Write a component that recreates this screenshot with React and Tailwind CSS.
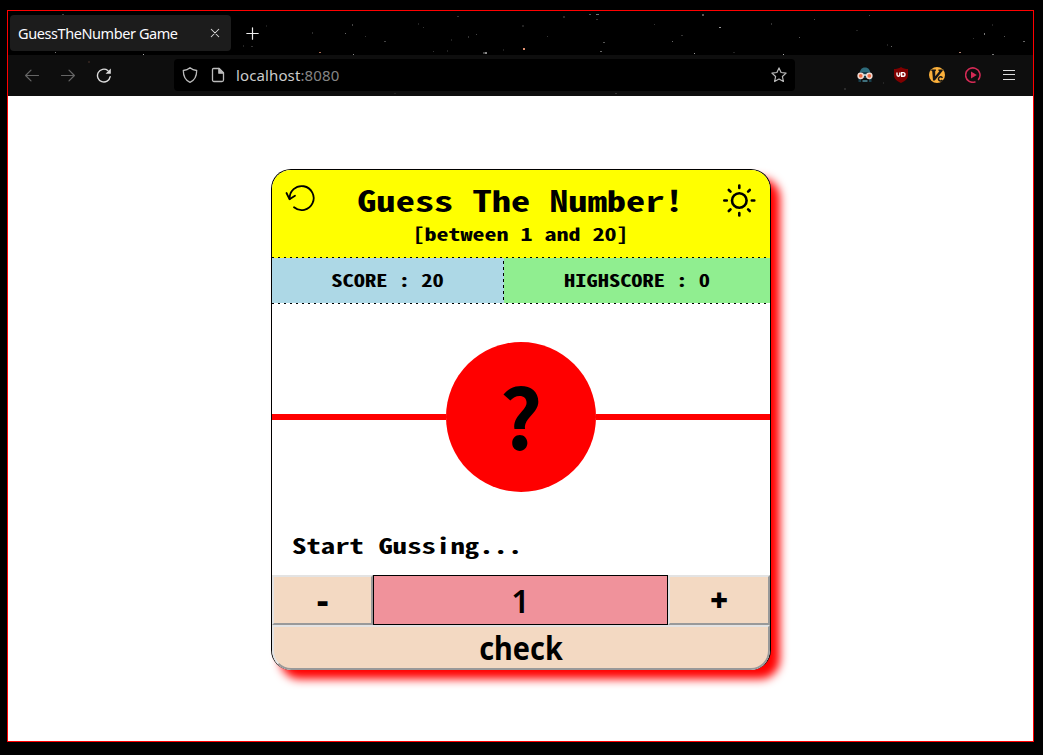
import React from "react";

const mono = "font-['Noto_Sans_Mono_CJK_JP','Noto_Sans_Mono_CJK_SC','Liberation_Mono',monospace]";
const sans = "font-['Noto_Sans',sans-serif]";

// x, y, w, h, colour of the stars in the browser theme backdrop
const stars = [
  [54, 3, 2, 1, "#3d4442"], [47, 41, 1, 1, "#777"], [135, 43, 1, 1, "#aaa"], [80, 50, 2, 2, "#2c201c"],
  [235, 34, 1, 2, "#242424"], [243, 35, 2, 1, "#333"], [258, 14, 1, 2, "#1d1d1d"], [304, 21, 1, 2, "#2c2c2c"],
  [337, 22, 1, 1, "#666"], [311, 41, 2, 1, "#a86a52"], [345, 43, 1, 1, "#888"], [344, 13, 1, 2, "#444"],
  [357, 25, 1, 1, "#333"], [376, 30, 2, 1, "#444"], [410, 12, 1, 2, "#222"], [415, 16, 1, 1, "#333"],
  [443, 28, 1, 2, "#222"], [425, 40, 1, 1, "#333"], [439, 39, 1, 2, "#222"], [460, 25, 1, 2, "#333"],
  [449, 5, 2, 1, "#333"], [468, 23, 1, 1, "#444"], [475, 41, 2, 2, "#444"], [477, 41, 2, 2, "#888"],
  [495, 38, 1, 2, "#222"], [514, 14, 2, 2, "#222"], [515, 37, 2, 2, "#e09070"], [539, 25, 1, 1, "#333"],
  [555, 5, 2, 2, "#2a2a2a"], [581, 3, 2, 1, "#4b5a58"], [588, 3, 3, 1, "#6b7876"], [588, 8, 2, 1, "#333"],
  [595, 31, 2, 1, "#555"], [592, 40, 2, 1, "#666"], [646, 13, 1, 1, "#333"], [664, 30, 1, 1, "#666"],
  [673, 24, 2, 1, "#333"], [686, 42, 1, 1, "#999"], [694, 3, 2, 2, "#555"], [711, 16, 2, 1, "#999"],
  [725, 41, 2, 1, "#222"], [763, 12, 1, 2, "#333"], [775, 43, 1, 1, "#aaa"], [791, 26, 1, 1, "#555"],
  [806, 8, 1, 1, "#444"], [848, 19, 2, 1, "#222"], [861, 4, 1, 1, "#444"], [883, 35, 1, 1, "#666"],
  [879, 33, 1, 2, "#222"], [951, 41, 2, 1, "#b08070"], [976, 22, 1, 2, "#777"], [984, 43, 2, 1, "#777"],
  [1015, 30, 2, 1, "#666"], [984, 13, 1, 2, "#222"], [996, 25, 1, 1, "#555"], [875, 71, 1, 2, "#252525"],
  [836, 77, 2, 2, "#2a2a2a"], [607, 82, 2, 1, "#333"], [386, 82, 2, 1, "#222"], [965, 27, 1, 1, "#333"],
];

function Stars() {
  return (
    <svg className="pointer-events-none absolute inset-0" width="1025" height="85" shapeRendering="crispEdges">
      {stars.map(([x, y, w, h, c], i) => (
        <rect key={i} x={x} y={y} width={w} height={h} fill={c} />
      ))}
    </svg>
  );
}

function Icon({ size = 16, children, className = "" }) {
  return (
    <svg width={size} height={size} viewBox="0 0 16 16" fill="none" stroke="currentColor" strokeWidth="1.2" strokeLinecap="round" strokeLinejoin="round" className={`block shrink-0 ${className}`}>
      {children}
    </svg>
  );
}

function Chrome() {
  return (
    <header className={`relative h-[85px] bg-black ${sans} text-[#fbfbfe]`}>
      <div className="flex h-11 items-start pl-[2px] pt-1">
        <div className="flex h-9 w-[221px] items-center justify-between rounded bg-[#1c1c1c] pl-2 pr-[10px]">
          <span className="whitespace-nowrap text-[14.5px] leading-5 tracking-[-0.42px]">GuessTheNumber Game</span>
          <Icon size={12} className="text-[#ddd]"><path d="M3 3l10 10M13 3L3 13" strokeWidth="1.4" /></Icon>
        </div>
        <Icon className="ml-[13px] mt-[10px] text-[#eee]"><path d="M8.500 2.800v11.400M2.800 8.500h11.400" /></Icon>
      </div>
      <div className="flex h-[41px] items-center bg-[#0e0e0e] pb-px pl-4">
        <Icon className="text-[#666]"><path d="M14.5 8.500H1.6M7 3.100L1.6 8.500 7 13.900" /></Icon>
        <Icon className="ml-5 text-[#666]"><path d="M1.5 8.500h12.9M9 3.100L14.4 8.500 9 13.900" /></Icon>
        <Icon className="ml-5 text-[#ddd]">
          <path d="M14.2 9.7A6.4 6.4 0 1 1 11.8 3.5" strokeWidth="1.4" />
          <path d="M14.8 1.5v5.2H9.6z" fill="currentColor" stroke="none" />
        </Icon>
        <div className="ml-[62px] flex h-8 w-[621px] items-center rounded bg-black pl-2">
          <Icon className="text-[#bbb]"><path d="M8 .8c2 1.8 4.2 2.5 6.7 2.7 0 5.400-1.600 9.600-6.700 11.800C2.900 13.100 1.300 8.900 1.300 3.500 3.800 3.300 6 2.600 8 .8z" strokeWidth="1.3" /></Icon>
          <Icon className="ml-3 text-[#bbb]"><path d="M3.500 1.500h5.700l4.300 4.300v7.200a1.500 1.500 0 0 1-1.500 1.500H4A1.500 1.500 0 0 1 2.500 13V2.500a1 1 0 0 1 1-1z" strokeWidth="1.300" /><path d="M8.800 1.500v4.700h4.700z" fill="currentColor" /></Icon>
          <span className="ml-[10px] text-[15px] leading-5 tracking-[0.12px] text-[#ccc]">localhost<span className="text-[#858585]">:8080</span></span>
          <Icon className="ml-auto mr-2 text-[#bbb]"><path d="M8 .9l2.100 4.600 5 .6-3.700 3.400 1 5L8 12l-4.400 2.500 1-5L.9 6.100l5-.6z" /></Icon>
        </div>
        <div className="ml-[62px] flex items-center gap-5">
          <svg width="16" height="16" viewBox="0 0 16 16">
            <path d="M2.500 8C2.500 3 4.500.5 8 .5S13.500 3 13.500 8z" fill="#2e6b7b" />
            <path d="M1.500 6.500L4 5h8l2.500 1.500V15H12v-4H4v4H1.500z" fill="#173f4c" />
            <path d="M5.500 13h5v2h-5z" fill="#3f6f7c" />
            <circle cx="3.700" cy="8.800" r="2.600" fill="#ed6b43" stroke="#f2d9cf" strokeWidth="1.500" />
            <circle cx="12.300" cy="8.800" r="2.600" fill="#ed6b43" stroke="#f2d9cf" strokeWidth="1.500" />
            <path d="M6.500 8h3" stroke="#fff" strokeWidth="1.300" />
          </svg>
          <svg width="16" height="16" viewBox="0 0 16 16">
            <path d="M8 0c2 1.500 4.500 2 7 2v6c0 4-3 6-7 8-4-2-7-4-7-8V2c2.500 0 5-.5 7-2z" fill="#800000" />
            <path d="M4 5.500v2.300a1.400 1.400 0 0 0 2.800 0V5.500M8.600 5.600h1.600a1.800 1.800 0 0 1 0 3.600H8.600z" fill="none" stroke="#fff" strokeWidth="1.400" />
          </svg>
          <svg width="16" height="16" viewBox="0 0 16 16">
            <circle cx="8" cy="8" r="8" fill="#fbb03b" />
            <path d="M2.300 2.500h4.600v1.300l-.7.500v5L10.300 4.300l-.9-.5V2.500h4.300v1.300L5.800 13.500H4L3.200 4.300l-.9-.5z" fill="#161616" />
            <path d="M13.400 10.800a2.100 2.100 0 1 0 0 2.200" fill="none" stroke="#161616" strokeWidth="1.500" />
          </svg>
          <svg width="16" height="16" viewBox="0 0 16 16">
            <path d="M13.200 12.900A7.200 7.200 0 1 0 10.500 14.800" fill="none" stroke="#d42a55" strokeWidth="1.500" />
            <path d="M6 4.500l5.800 3.500L6 11.500z" fill="#d42a55" />
          </svg>
          <svg width="16" height="16" viewBox="0 0 16 16" shapeRendering="crispEdges">
            <path d="M2 3h12v1H2zM2 7h12v1H2zM2 12h12v1H2z" fill="#ddd" />
          </svg>
        </div>
      </div>
      <Stars />
    </header>
  );
}

const raised = "border-2 border-b-[#999] border-l-[#e3e3e3] border-r-[#999] border-t-[#e3e3e3] bg-[#f3d9c2]";

function Card() {
  return (
    <main className={`flex h-[501px] w-[500px] flex-col overflow-hidden rounded-[20px] border border-b-0 border-black bg-white font-bold text-black shadow-[9px_9px_10px_red] ${mono}`}>
      <div className="flex h-[87px] justify-between bg-[#ff0] pl-[13px] pr-[14px]">
        <svg width="32" height="32" viewBox="0 0 32 32" className="mt-3 block" fill="none" stroke="#000" strokeWidth="1.800" strokeLinecap="round" strokeLinejoin="round">
          <path d="M4.700 17A12 12 0 1 1 9 25.300" />
          <path d="M1.500 11l3 6.200 5.500-3.400" />
        </svg>
        <div className="flex flex-col items-center pl-[2px] text-center">
          <h1 className="mt-[10px] h-[38px] scale-y-75 whitespace-pre text-[38.4px] leading-[38px]">Guess The Number!</h1>
          <h2 className="mt-[3px] h-6 scale-y-75 whitespace-pre text-[24px] leading-6">[between 1 and 20]</h2>
        </div>
        <svg width="34" height="34" viewBox="0 0 34 34" className="mt-[13px] block" fill="none" stroke="#000" strokeWidth="2.600" strokeLinecap="round">
          <circle cx="17.300" cy="17.500" r="7.300" />
          <path d="M17.300 2.500v2.500M17.300 30v2.500M2.300 17.500h2.500M29.800 17.500H32.300M6.800 7l1.700 1.700M26.100 26.300l1.700 1.700M6.800 28l1.700-1.700M26.100 8.700L27.800 7" />
        </svg>
      </div>
      <div className="h-px bg-[#ff0] bg-[repeating-linear-gradient(90deg,#000_0_2px,transparent_2px_6px)]" />
      <div className="flex h-[45px] text-[22.46px] leading-[43px]">
        <div className="w-[231px] bg-[#add8e6] text-center"><span className="block scale-y-75 whitespace-pre">SCORE : 20</span></div>
        <div className="w-px bg-[#add8e6] bg-[repeating-linear-gradient(180deg,transparent_0_3px,#000_3px_6px)]" />
        <div className="flex-1 bg-[#90ee90] text-center"><span className="block scale-y-75 whitespace-pre">HIGHSCORE : 0</span></div>
      </div>
      <div className="h-px bg-[repeating-linear-gradient(90deg,#000_0_2px,transparent_2px_6px)]" />
      <div className="mt-[38px] flex h-[150px] items-center">
        <div className="h-[6px] flex-1 bg-[#f00]" />
        <div className="flex size-[150px] items-center justify-center rounded-full bg-[#f00] font-['Noto_Sans_CJK_JP',sans-serif] text-[83px] leading-none">
          <span className="mb-[6px] block">?</span>
        </div>
        <div className="h-[6px] flex-1 bg-[#f00]" />
      </div>
      <p className="mt-[35px] h-[48px] pl-5 text-[28.8px] leading-9"><span className="block scale-y-75 whitespace-pre">Start Gussing...</span></p>
      <div className={`flex h-[50px] ${sans} text-[32px] font-semibold leading-[46px]`}>
        <button className={`w-[101px] font-black ${raised}`}><span className="block scale-x-110">-</span></button>
        <div className="w-[295px] border border-black bg-[#f0929b] text-center leading-[50px]">1</div>
        <button className={`w-[102px] text-[31px] font-black ${raised}`}>+</button>
      </div>
      <button className={`h-[45px] rounded-b-[19px] ${raised} ${sans} text-[32px] font-bold leading-[42px]`}>
        <span className="block scale-x-[0.9]">check</span>
      </button>
    </main>
  );
}

export default function App() {
  return (
    <div className="h-[755px] w-[1043px] overflow-hidden bg-black pl-[7px] pt-[10px]">
      <div className="flex h-[732px] w-[1027px] flex-col border border-[#f00] bg-white">
        <Chrome />
        <div className="flex flex-1 justify-center pl-px pt-[73px]">
          <Card />
        </div>
      </div>
    </div>
  );
}
